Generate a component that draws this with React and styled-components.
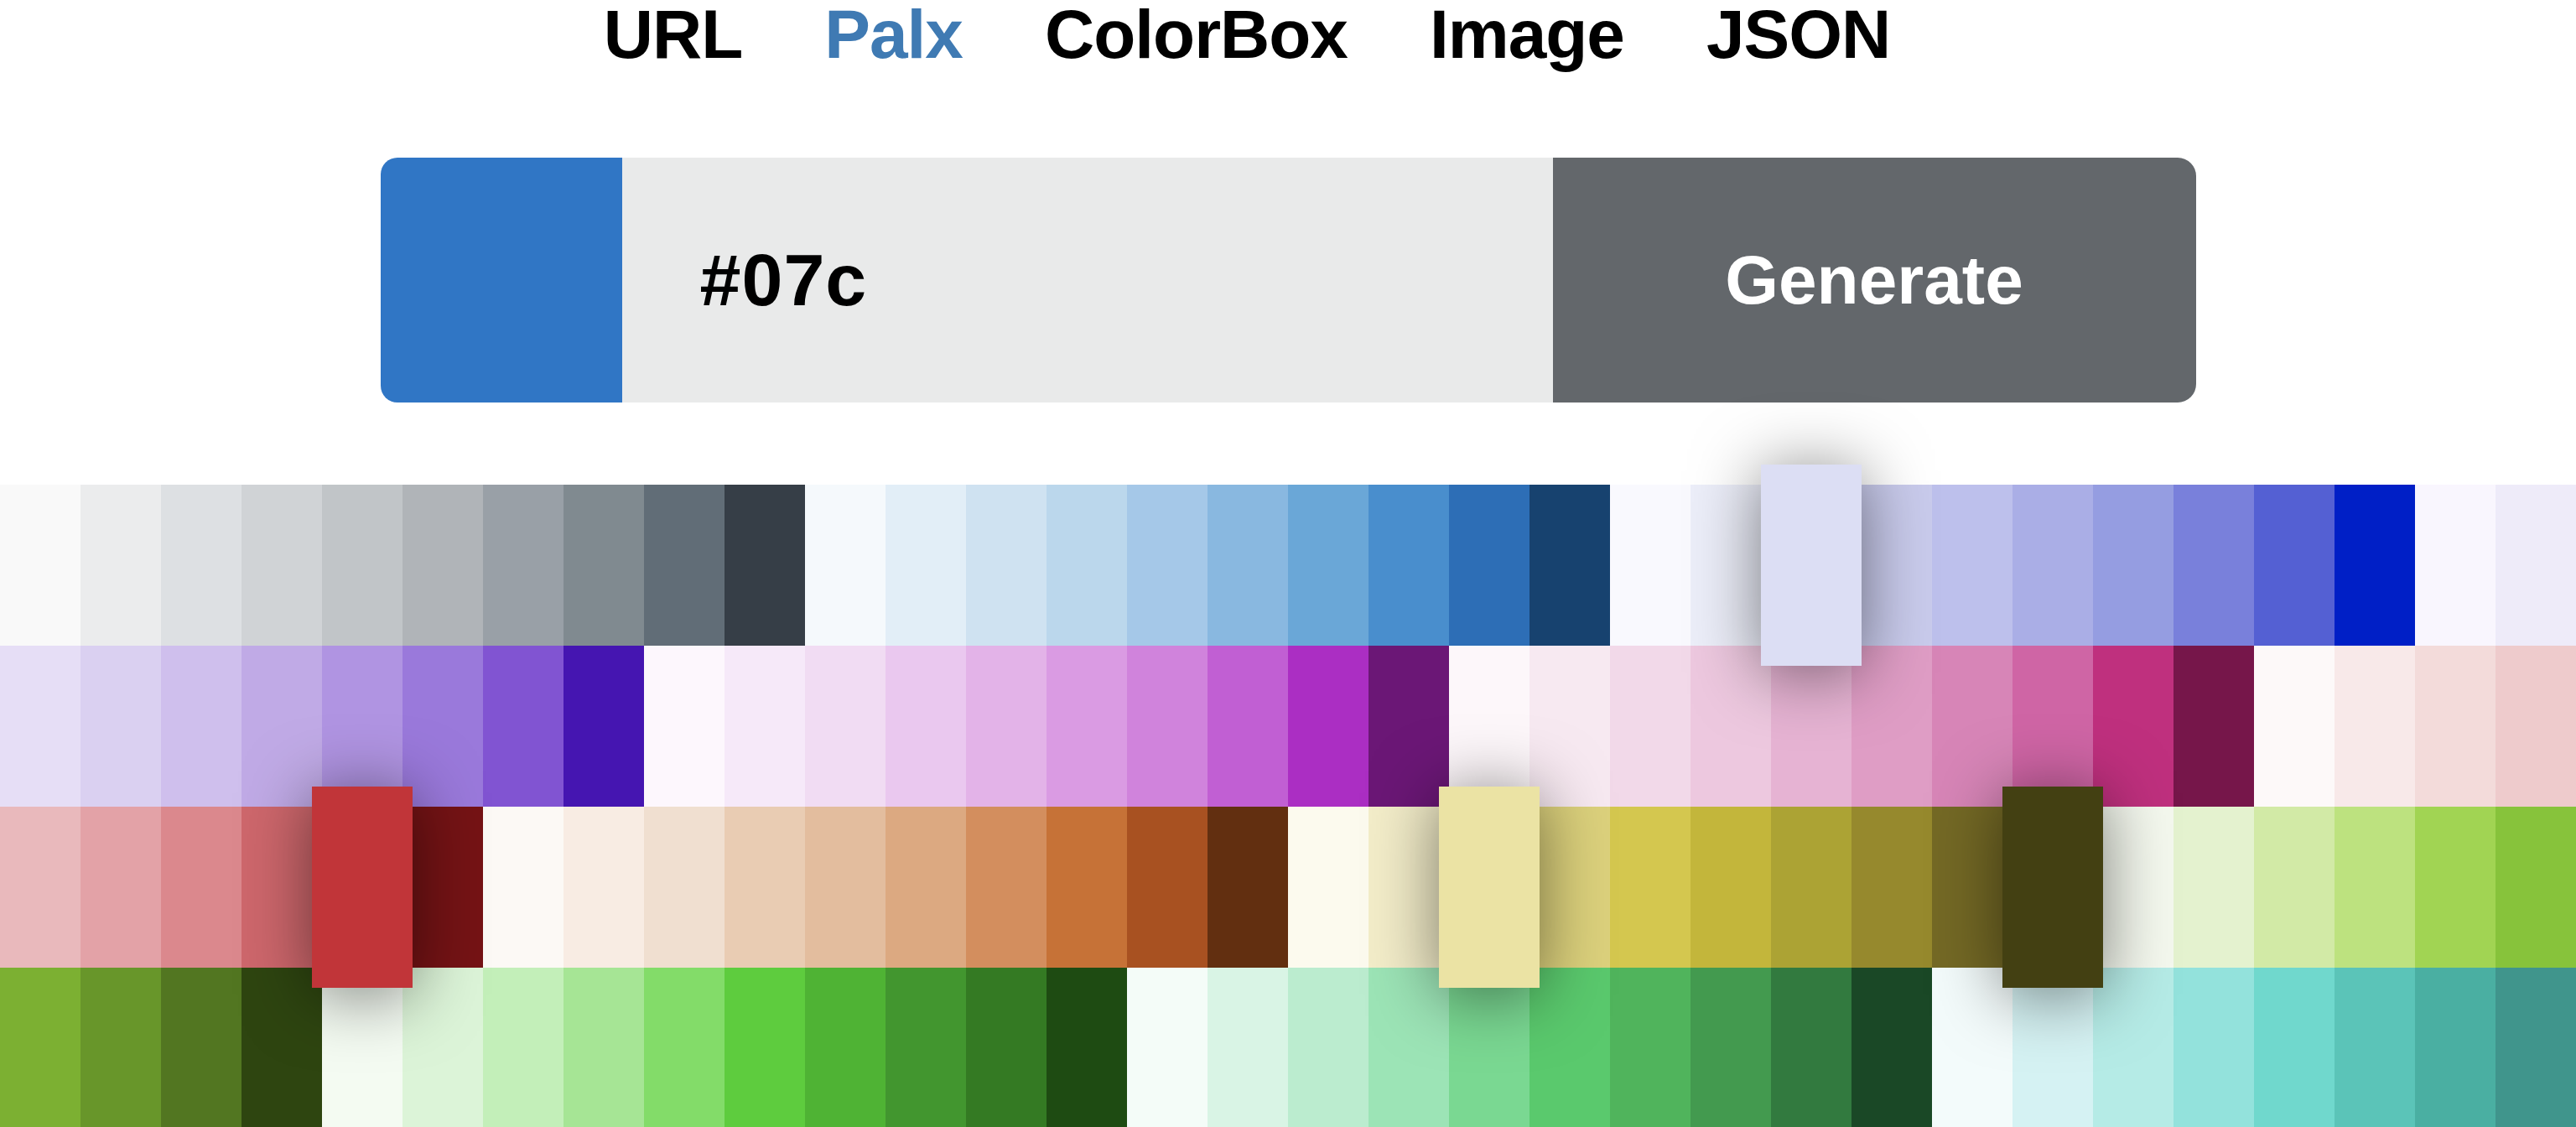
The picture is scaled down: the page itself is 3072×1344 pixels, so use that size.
import React from "react";
import styled, { createGlobalStyle, css } from "styled-components";

const colors = [
    // gray
    "#f9f9f9", "#ebeced", "#dde0e3", "#d0d3d6", "#c1c5c8", "#b0b4b8", "#99a0a7", "#808a90", "#616d77", "#363e47",
    // blue
    "#f5f9fc", "#e2eef7", "#cfe2f1", "#bbd7ec", "#a5c8e8", "#89b8e0", "#6aa7d7", "#498ecd", "#2d6eb6", "#17426f",
    // indigo
    "#f9f9fe", "#eceef9", "#dcdef4", "#c9cbec", "#bdc0ec", "#aaaee6", "#959de1", "#7980db", "#5460d3", "#001fc6",
    // violet
    "#f9f6fe", "#eeebf9", "#e6def6", "#dad0f1", "#cfbfed", "#c0aae6", "#b094e2", "#9a79db", "#8154d2", "#4515b1",
    // fuschia
    "#fdf7fd", "#f6e9f9", "#f1dcf3", "#eac8ef", "#e3b3e8", "#da9be3", "#d083dc", "#c15fd3", "#ab2ec3", "#6b1776",
    // pink
    "#fdf7fa", "#f7e9f1", "#f2d9e9", "#edc8df", "#e6b3d3", "#df9dc5", "#d785b7", "#cf65a5", "#bf307e", "#76164a",
    // red
    "#fdf9f9", "#f8e9e9", "#f3dbda", "#eecbcc", "#e9b9bc", "#e3a2a7", "#db888d", "#ce676c", "#c13539", "#751315",
    // orange
    "#fcf9f5", "#f8ece3", "#f0dfd0", "#e9ccb3", "#e3bd9e", "#dca981", "#d38e5e", "#c67237", "#a85121", "#622f10",
    // yellow
    "#fcfaee", "#f3edc9", "#ebe3a4", "#dcd17c", "#d4c74f", "#c3b63b", "#aca334", "#96892d", "#746925", "#434012",
    // lime
    "#f4f8ee", "#e4f2cf", "#d2eaa6", "#bde27f", "#a1d453", "#87c33b", "#7cb032", "#68962a", "#527621", "#2e4510",
    // green
    "#f4fbf2", "#dcf4d8", "#c3efb9", "#a6e595", "#83dc69", "#5ecc3e", "#4fb334", "#42962f", "#347a23", "#1e4b12",
    // teal
    "#f4fcf8", "#d9f4e5", "#bbeccf", "#9ce4b6", "#7ad892", "#5ac96d", "#50b45c", "#439a4f", "#327a3f", "#1a4826",
    // cyan
    "#f3fbfb", "#d5f2f3", "#b5ebe6", "#93e2dc", "#70d8cd", "#5bc4b8", "#4aafa2", "#40958c", "#2f6e67", "#1b3e3a",
];

const lifted = [22, 68, 82, 89];

const links = ["URL", "Palx", "ColorBox", "Image", "JSON"];

export default function App() {
    return (
        <Page>
            <GlobalStyle />
            <Nav>
                {links.map(name => (
                    <NavLink key={name} $active={name === "Palx"}>
                        {name}
                    </NavLink>
                ))}
            </Nav>
            <Form onSubmit={e => e.preventDefault()}>
                <ColorSwatch />
                <Input type="text" defaultValue="#07c" />
                <Button type="submit">Generate</Button>
            </Form>
            <Grid>
                {colors.map((c, i) => (
                    <Swatch key={i} $color={c} $lifted={lifted.includes(i)} />
                ))}
            </Grid>
        </Page>
    );
}

const GlobalStyle = createGlobalStyle`
    html, body {
        margin: 0;
        padding: 0;
        background: #fff;
        overflow: hidden;
    }
    body {
        font-family: "Liberation Sans", Arial, Helvetica, sans-serif;
        color: #000;
    }
`;

const Page = styled.div`
    display: flex;
    flex-direction: column;
    align-items: center;
`;

const Nav = styled.nav`
    display: flex;
    justify-content: center;
    height: 82px;
    margin-bottom: 106px;
`;

const NavLink = styled.a`
    font-size: 82px;
    line-height: 82px;
    font-weight: 700;
    letter-spacing: -1px;
    margin-right: 98px;
    color: ${p => (p.$active ? "#3f7ab3" : "#000")};
    text-decoration: none;
    cursor: pointer;
`;

const Form = styled.form`
    display: flex;
    width: 2165px;
    height: 292px;
    margin: 0 0 98px;
`;

const ColorSwatch = styled.div`
    width: 288px;
    flex: none;
    background: #3076c5;
    border-radius: 20px 0 0 20px;
`;

const Input = styled.input`
    flex: 1;
    min-width: 0;
    border: 0;
    outline: none;
    margin: 0;
    padding: 0 0 0 93px;
    background: #e9eaea;
    font-family: inherit;
    font-size: 88px;
    font-weight: 700;
    letter-spacing: 1px;
    color: #000;
`;

const Button = styled.button`
    width: 767px;
    flex: none;
    border: 0;
    margin: 0;
    padding: 0;
    background: #63676b;
    color: #fff;
    font-family: inherit;
    font-size: 82px;
    font-weight: 700;
    border-radius: 0 22px 22px 0;
    cursor: pointer;
`;

const Grid = styled.div`
    display: grid;
    grid-template-columns: repeat(32, 1fr);
    grid-auto-rows: 192px;
    width: 100%;
`;

const Swatch = styled.div`
    background: ${p => p.$color};

    ${p =>
        p.$lifted &&
        css`
            position: relative;
            z-index: 1;
            transform: scale(1.25);
            box-shadow: 0 6px 64px rgba(0, 0, 0, 0.5);
        `}
`;
